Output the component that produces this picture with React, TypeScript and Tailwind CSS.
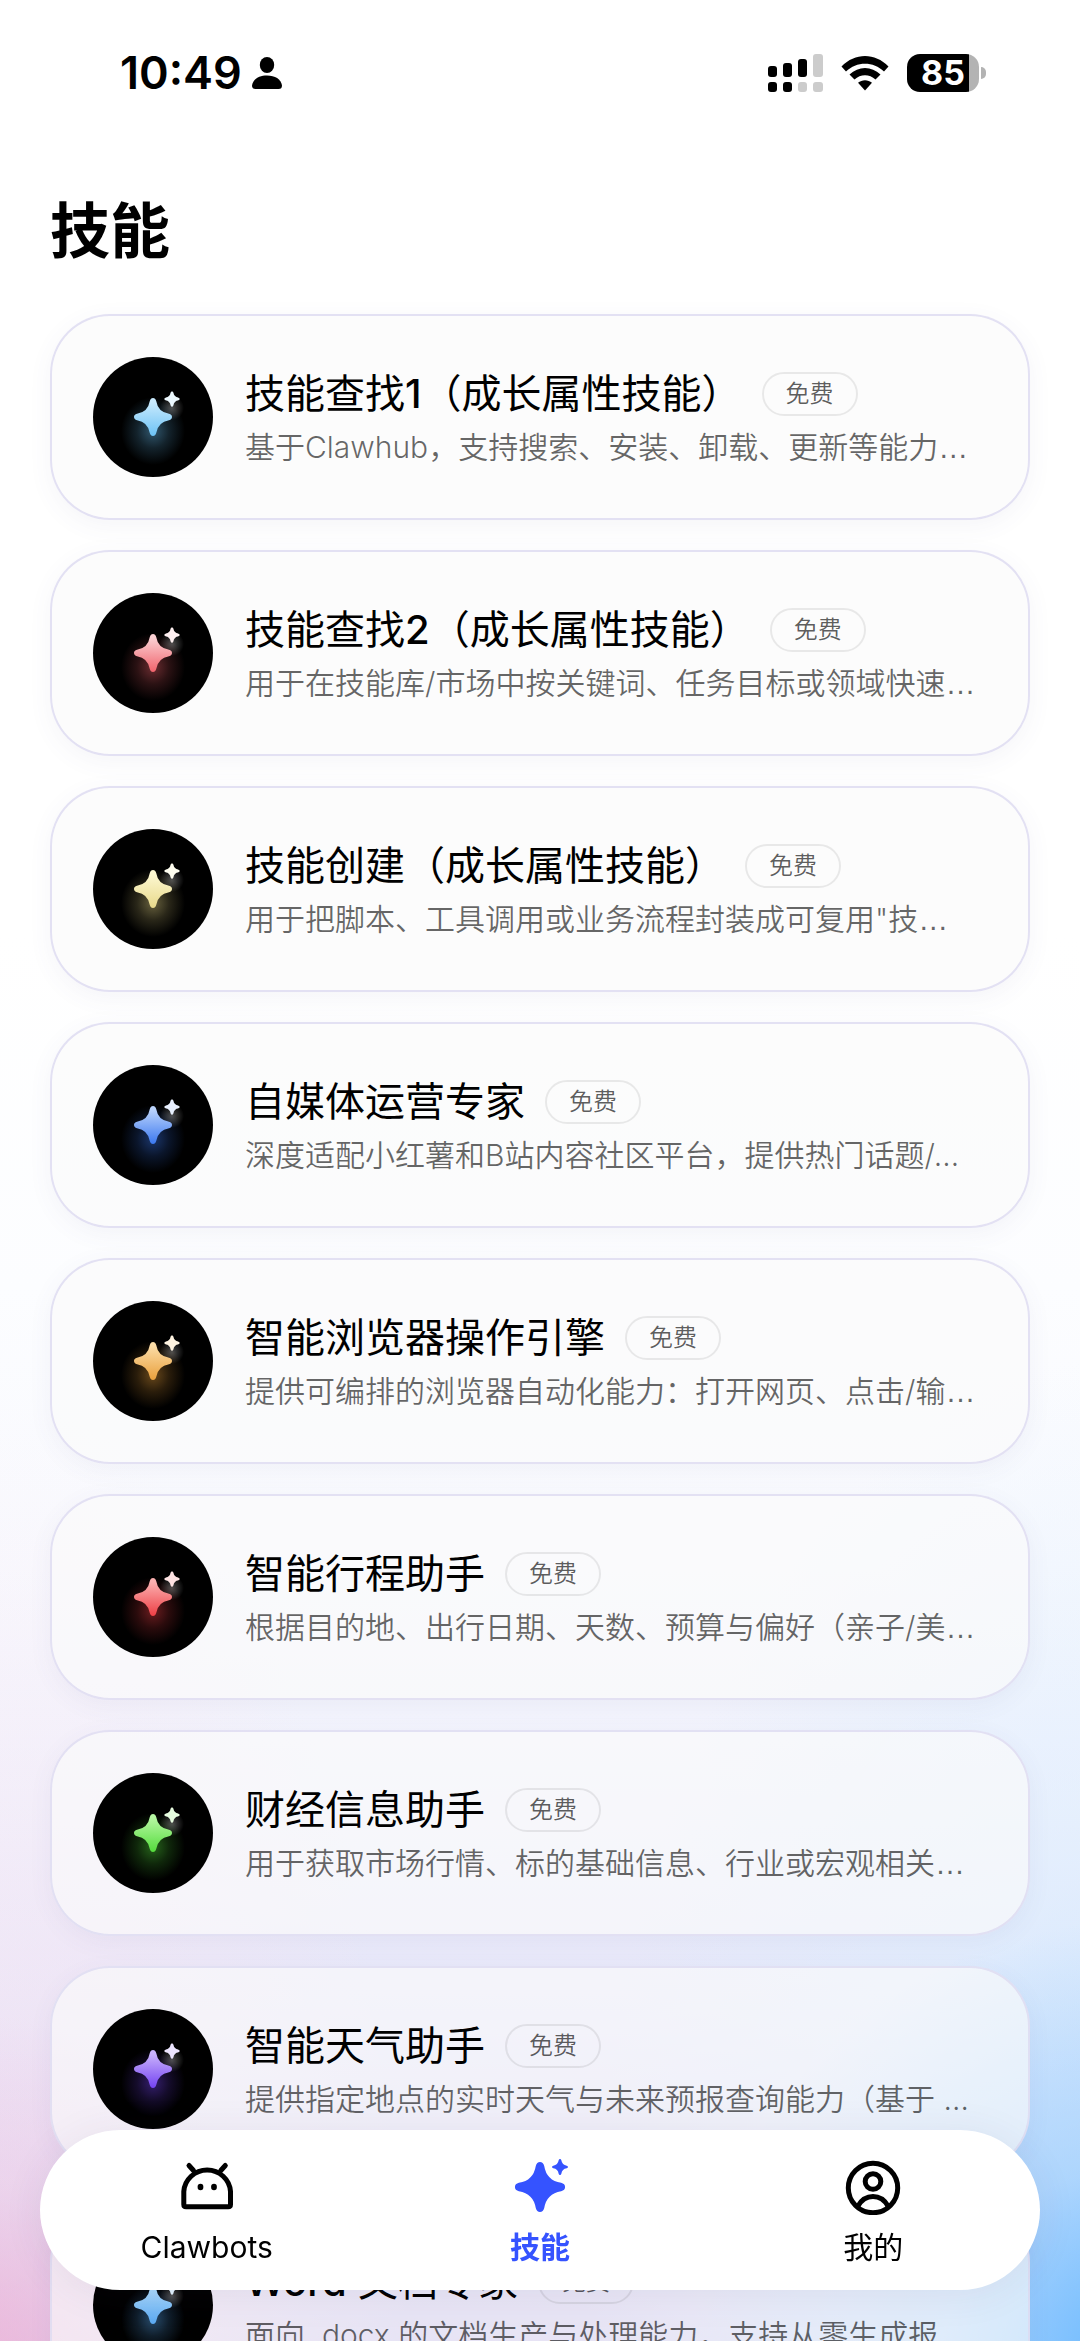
import { useId } from "react";

type Skill = { title: string; desc: string; from: string; to: string; wideDots?: boolean };

const skills: Skill[] = [
  { title: "技能查找1（成长属性技能）", desc: "基于Clawhub，支持搜索、安装、卸载、更新等能力", from: "#c9eafd", to: "#6cc2f5", wideDots: true },
  { title: "技能查找2（成长属性技能）", desc: "用于在技能库/市场中按关键词、任务目标或领域快速", from: "#fbd0d3", to: "#f0636c", wideDots: true },
  { title: "技能创建（成长属性技能）", desc: "用于把脚本、工具调用或业务流程封装成可复用\"技", from: "#fdf8d2", to: "#e8d98a", wideDots: true },
  { title: "自媒体运营专家", desc: "深度适配小红薯和B站内容社区平台，提供热门话题/", from: "#b9d2fb", to: "#3b78f0" },
  { title: "智能浏览器操作引擎", desc: "提供可编排的浏览器自动化能力：打开网页、点击/输", from: "#fbdca6", to: "#e9a03c", wideDots: true },
  { title: "智能行程助手", desc: "根据目的地、出行日期、天数、预算与偏好（亲子/美", from: "#fbb0b0", to: "#ee3f45", wideDots: true },
  { title: "财经信息助手", desc: "用于获取市场行情、标的基础信息、行业或宏观相关", from: "#b6f7a2", to: "#54dc3c", wideDots: true },
  { title: "智能天气助手", desc: "提供指定地点的实时天气与未来预报查询能力（基于 ", from: "#c9b2fb", to: "#7443f2" },
  { title: "Word 文档专家", desc: "面向 .docx 的文档生产与处理能力，支持从零生成报", from: "#a9d8fb", to: "#5aa9f2", wideDots: true },
];

const STAR =
  "M0-19Q2.4-19 3.200-16Q5-5 16-3.200Q19-2.400 19 0Q19 2.400 16 3.200Q5 5 3.200 16Q2.400 19 0 19Q-2.400 19-3.200 16Q-5 5-16 3.200Q-19 2.400-19 0Q-19-2.400-16-3.200Q-5-5-3.200-16Q-2.400-19 0-19Z";

function SkillIcon({ from, to }: { from: string; to: string }) {
  const id = useId();
  return (
    <svg viewBox="0 0 120 120" className="size-[120px] shrink-0" aria-hidden="true">
      <defs>
        <linearGradient id={id + "g"} x1="0" y1="0" x2="0" y2="1">
          <stop offset="0.1" stopColor={from} />
          <stop offset="1" stopColor={to} />
        </linearGradient>
        <radialGradient id={id + "h"}>
          <stop offset="0" stopColor={to} stopOpacity="0.45" />
          <stop offset="0.5" stopColor={to} stopOpacity="0.18" />
          <stop offset="1" stopColor={to} stopOpacity="0" />
        </radialGradient>
        <radialGradient id={id + "w"}>
          <stop offset="0" stopColor="#fff" stopOpacity="0.3" />
          <stop offset="1" stopColor="#fff" stopOpacity="0" />
        </radialGradient>
      </defs>
      <circle cx="60" cy="60" r="60" fill="#000" />
      <ellipse cx="60" cy="74" rx="32" ry="34" fill={`url(#${id}h)`} />
      <circle cx="79" cy="51" r="12" fill={`url(#${id}w)`} />
      <path d={STAR} transform="translate(60 60)" fill={`url(#${id}g)`} />
      <path d={STAR} transform="translate(79 42) scale(0.4)" fill="#fff" />
      <path d={STAR} transform="translate(79 42) scale(0.4)" fill={from} fillOpacity="0.35" />
    </svg>
  );
}

function SkillTitle({ text }: { text: string }) {
  return (
    <h2 className="truncate text-[40px] leading-[56px] font-normal text-black">
      {text.split(/([A-Za-z0-9]+)/).map((part, i) =>
        i % 2 ? (
          <span key={i} className="font-medium">
            {part}
          </span>
        ) : (
          part
        ),
      )}
    </h2>
  );
}

function SkillCard({ skill }: { skill: Skill }) {
  return (
    <li className="flex h-[206px] items-center gap-8 rounded-[60px] border-2 border-[#dcdaf0]/80 bg-[#fafafa]/65 px-[41px] shadow-[0_6px_24px_rgba(90,80,140,0.06)]">
      <SkillIcon from={skill.from} to={skill.to} />
      <div className="min-w-0 flex-1 pt-1">
        <div className="flex items-center gap-5">
          <SkillTitle text={skill.title} />
          <span className="shrink-0 rounded-full border-2 border-black/8 px-[22px] text-[24px] leading-[40px] font-[350] text-black/65">
            免费
          </span>
        </div>
        <p className="truncate text-[30px] leading-[50px] font-[350] text-black/60">
          {skill.desc}
          <span className={skill.wideDots ? "font-['Liberation_Sans',sans-serif]" : ""}>…</span>
        </p>
      </div>
    </li>
  );
}

function StatusBar() {
  return (
    <div className="flex h-[146px] items-center justify-between pr-[94px] pl-[120px]">
      <div className="flex items-center gap-2.5">
        <span className="text-[45px] leading-[54px] font-semibold text-black">10:49</span>
        <svg viewBox="0 0 30 32" className="h-8 w-[30px]" aria-hidden="true">
          <ellipse cx="15" cy="8" rx="7.2" ry="8" />
          <path d="M0 28.5C1 22 7 18.500 15 18.500S29 22 30 28.500Q30 32 26.500 32H3.500Q0 32 0 28.500Z" />
        </svg>
      </div>
      <div className="flex items-center gap-[18px]">
        <svg viewBox="0 0 55 38" className="h-[38px] w-[55px]" aria-hidden="true">
          <rect x="0" y="12" width="9" height="11" rx="3" />
          <rect x="15" y="9" width="9" height="14" rx="3" />
          <rect x="30" y="5" width="9" height="18" rx="3" />
          <rect x="45" y="0" width="10" height="23" rx="3" fill="#ccc" />
          <rect x="0" y="28" width="9" height="10" rx="3" />
          <rect x="15" y="28" width="9" height="10" rx="3" />
          <rect x="30" y="28" width="9" height="10" rx="3" fill="#ccc" />
          <rect x="45" y="28" width="10" height="10" rx="3" fill="#ccc" />
        </svg>
        <svg viewBox="0 0 48 35" className="h-[35px] w-12" aria-hidden="true">
          <path d="M0.500 10.500C14-3.500 34-3.500 47.500 10.500L43 15.500C32.500 5 15.500 5 5 15.500Z" />
          <path d="M8.500 18.500C17.500 9.800 30.500 9.800 39.500 18.500L34.500 23.500C28.500 17.800 19.500 17.800 13.500 23.500Z" />
          <path d="M17 26.700C21 23.300 27 23.300 31 26.700L24 34.500Z" />
        </svg>
        <div className="flex items-center gap-0.5">
          <div className="flex h-[38px] w-[72px] items-center justify-center rounded-[13px] bg-linear-to-r from-black from-86% to-[#b3b3b3] to-86%">
            <span className="text-[34px] leading-[38px] font-bold text-white">85</span>
          </div>
          <div className="h-3 w-[5px] rounded-r-full bg-[#b3b3b3]" />
        </div>
      </div>
    </div>
  );
}

function BotIcon() {
  return (
    <svg viewBox="0 0 56 56" className="size-14" fill="none" stroke="#000" strokeWidth="5" strokeLinecap="round" strokeLinejoin="round" aria-hidden="true">
      <path d="M4.800 32.500A23.400 23 0 0 1 51.500 32.500V45.500Q51.500 47.800 49.200 47.800H7.100Q4.800 47.800 4.800 45.500Z" />
      <path d="M10 6.500L14.500 11.500M46.300 6.500L41.800 11.500" />
      <ellipse cx="21.500" cy="28" rx="2.900" ry="3.300" fill="#000" stroke="none" />
      <ellipse cx="35" cy="28" rx="2.900" ry="3.300" fill="#000" stroke="none" />
    </svg>
  );
}

function SparkIcon() {
  return (
    <svg viewBox="0 0 56 56" className="size-14" fill="#3553ff" aria-hidden="true">
      <path d={STAR} transform="translate(28 28) scale(1.32)" />
      <path d={STAR} transform="translate(48 8) scale(0.42)" />
    </svg>
  );
}

function MeIcon() {
  return (
    <svg viewBox="0 0 56 56" className="size-14" fill="none" stroke="#000" strokeWidth="5" aria-hidden="true">
      <circle cx="28" cy="29" r="24.700" />
      <circle cx="28" cy="22.500" r="7.800" />
      <path d="M13 47C17 40 22 37.500 28 37.500S39 40 43 47" />
    </svg>
  );
}

export default function App() {
  return (
    <div
      lang="zh-CN"
      className="relative h-screen overflow-hidden bg-white font-['Inter','Noto_Sans_CJK_SC',sans-serif]"
    >
      <div
        aria-hidden="true"
        className="absolute inset-0 bg-[radial-gradient(ellipse_32%_17%_at_-3%_103%,rgba(238,165,205,0.75),rgba(240,190,222,0.3)_55%,transparent),radial-gradient(ellipse_42%_19%_at_106%_101%,rgba(95,180,255,0.95),rgba(140,200,255,0.5)_45%,transparent),radial-gradient(ellipse_38%_40%_at_0%_100%,rgba(252,228,240,0.6),transparent),radial-gradient(ellipse_50%_42%_at_104%_100%,rgba(200,230,255,0.9),rgba(218,238,255,0.5)_50%,transparent),linear-gradient(to_top,#c2b8ea_0%,#d9d5f4_7%,#e6e6f9_14%,#eff0fc_22%,#f8f9fe_33%,#fcfdff_45%,#fff_60%)]"
      />
      <div className="relative">
        <StatusBar />
        <main className="px-[50px]">
          <h1 className="pt-[41px] text-[60px] leading-[88px] font-semibold text-black">技能</h1>
          <ul className="mt-[39px] flex flex-col gap-[30px]">
            {skills.map((s) => (
              <SkillCard key={s.title} skill={s} />
            ))}
          </ul>
        </main>
      </div>
      <nav className="fixed inset-x-10 bottom-[51px] grid h-40 grid-cols-3 rounded-full bg-white text-[30px] leading-10 shadow-[0_4px_40px_rgba(60,50,100,0.08)]">
        <button type="button" className="flex flex-col items-center justify-center gap-3 pt-1.5 text-black">
          <BotIcon />
          <span>Clawbots</span>
        </button>
        <button type="button" aria-current="page" className="flex flex-col items-center justify-center gap-3 pt-1.5 font-semibold text-[#3553ff]">
          <SparkIcon />
          <span>技能</span>
        </button>
        <button type="button" className="flex flex-col items-center justify-center gap-3 pt-1.5 text-black">
          <MeIcon />
          <span>我的</span>
        </button>
      </nav>
    </div>
  );
}
